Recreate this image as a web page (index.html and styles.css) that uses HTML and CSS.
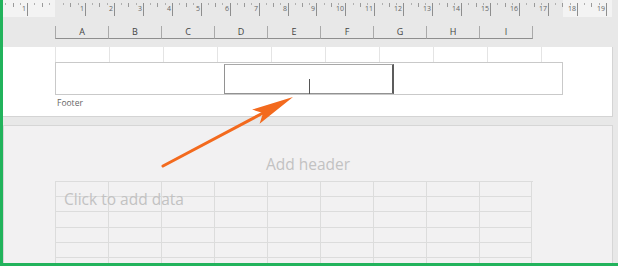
FILE: index.html
```html
<!DOCTYPE html>
<html lang="en">
<head>
    <meta charset="UTF-8">
    <meta name="viewport" content="width=device-width, initial-scale=1.0">
    <title>Page Layout - Footer</title>
    <link rel="stylesheet" href="styles.css">
</head>
<body>
    <div class="screen">
        <svg class="ruler" id="ruler" width="615" height="17"></svg>

        <div class="col-header">
            <div class="col">A</div>
            <div class="col">B</div>
            <div class="col">C</div>
            <div class="col">D</div>
            <div class="col">E</div>
            <div class="col">F</div>
            <div class="col">G</div>
            <div class="col">H</div>
            <div class="col">I</div>
        </div>

        <div class="page page-top">
            <div class="cells">
                <div></div><div></div><div></div><div></div><div></div><div></div><div></div><div></div><div></div>
            </div>
            <div class="footer-box">
                <div class="section"></div>
                <div class="section active"><span class="caret"></span></div>
                <div class="section"></div>
            </div>
            <div class="footer-label">Footer</div>
        </div>

        <div class="page page-next">
            <div class="add-header">Add header</div>
            <div class="data-area">
                <div class="data-grid" id="data-grid"></div>
                <div class="placeholder">Click to add data</div>
            </div>
        </div>

        <svg class="arrow" width="618" height="266" viewBox="0 0 618 266">
            <line x1="163" y1="166" x2="264" y2="112.5" stroke="#f36a1e" stroke-width="3" stroke-linecap="round"/>
            <polygon points="293,97 259.6,123.8 263,112.9 252.1,109.6" fill="#f36a1e"/>
        </svg>
    </div>

    <script>
        // ruler ticks and numbers
        const svg = document.getElementById('ruler');
        const NS = 'http://www.w3.org/2000/svg';
        const origin = 53;
        const unit = 28.94;

        function add(tag, attrs, text) {
            const el = document.createElementNS(NS, tag);
            for (const k in attrs) el.setAttribute(k, attrs[k]);
            if (text) el.textContent = text;
            svg.appendChild(el);
        }

        add('rect', { x: 0, y: 0, width: 52, height: 17, fill: '#f3f3f3' });
        add('rect', { x: 560, y: 0, width: 49, height: 17, fill: '#f3f3f3' });

        for (let q = -8; q <= 80; q++) {
            const x = Math.round(origin + q * unit / 4) + 0.5;
            if (x < 2 || x > 610 || q === 0) continue;
            if (q % 4 === 0) {
                add('line', { x1: x, y1: 3, x2: x, y2: 16, stroke: '#8e8e8e' });
                add('text', { x: x - 1.5, y: 11, 'text-anchor': 'end', class: 'ruler-num' }, String(Math.abs(q / 4)));
            } else if (q % 2 === 0) {
                add('line', { x1: x, y1: 3, x2: x, y2: 7, stroke: '#9a9a9a' });
            } else {
                add('line', { x1: x, y1: 3, x2: x, y2: 5, stroke: '#b0b0b0' });
            }
        }

        // empty cells of the next page
        const grid = document.getElementById('data-grid');
        for (let i = 0; i < 54; i++) {
            const cell = document.createElement('div');
            cell.className = 'cell';
            grid.appendChild(cell);
        }
    </script>
</body>
</html>
```

FILE: styles.css
```css
body {
    margin: 0;
    font-family: 'Open Sans', 'Liberation Sans', sans-serif;
}
.screen {
    position: relative;
    width: 618px;
    height: 266px;
    box-sizing: border-box;
    border-left: 3px solid #22b35c;
    border-bottom: 3px solid #22b35c;
    background: #e8e8e8;
    overflow: hidden;
}
.ruler {
    display: block;
}
.ruler-num {
    font-family: 'Open Sans', 'Liberation Sans', sans-serif;
    font-size: 7px;
    fill: #666;
}
.col-header {
    display: flex;
    height: 30px;
    box-sizing: border-box;
    padding: 9px 0 0 52px;
}
.col {
    width: 53px;
    height: 13px;
    box-sizing: border-box;
    border-left: 1px solid #a9a9a9;
    border-bottom: 1px solid #8e8e8e;
    font-size: 9px;
    line-height: 12px;
    text-align: center;
    color: #444;
}
.col:last-child {
    width: 54px;
    border-right: 1px solid #a9a9a9;
}
.page {
    width: 610px;
    box-sizing: border-box;
}
.page-top {
    height: 70px;
    padding-left: 52px;
    background: #fff;
    border-right: 1px solid #d4d4d4;
    border-bottom: 1px solid #d4d4d4;
}
.cells {
    display: flex;
    height: 15px;
}
.cells div {
    width: 53px;
    border-left: 1px solid #e4e4e4;
}
.cells div:last-child {
    border-right: 1px solid #e4e4e4;
}
.footer-box {
    display: flex;
    width: 508px;
    height: 33px;
    box-sizing: border-box;
    border: 1px solid #c9c9c9;
}
.section {
    flex: 1;
}
.section.active {
    position: relative;
    margin-top: 1px;
    border: 1px solid #929292;
    border-top-color: #a8a8a8;
    border-right: 2px solid #5c5c5c;
}
.caret {
    position: absolute;
    left: 84px;
    top: 14px;
    width: 1px;
    height: 15px;
    background: #555;
}
.footer-label {
    margin: 2px 0 0 2px;
    font-size: 8.5px;
    line-height: 11px;
    color: #666;
}
.page-next {
    height: 138px;
    margin-top: 8px;
    background: #f2f1f2;
    border: 1px solid #d6d6d6;
    border-bottom: none;
}
.add-header {
    margin-top: 28px;
    font-size: 15.5px;
    line-height: 21px;
    text-align: center;
    color: #c2c2c2;
}
.data-area {
    position: relative;
    width: 478px;
    margin: 6px 0 0 51px;
}
.data-grid {
    display: grid;
    grid-template-columns: repeat(9, 53px);
    grid-auto-rows: 15.2px;
    border-top: 1px solid #dcdcdc;
}
.cell {
    box-sizing: border-box;
    border-left: 1px solid #dcdcdc;
    border-bottom: 1px solid #dcdcdc;
}
.cell:nth-child(9n) {
    border-right: 1px solid #dcdcdc;
}
.placeholder {
    position: absolute;
    left: 9px;
    top: 8px;
    font-size: 15.5px;
    line-height: 21px;
    color: #c2c2c2;
    white-space: nowrap;
}
.arrow {
    position: absolute;
    left: -3px;
    top: 0;
    pointer-events: none;
}
```
